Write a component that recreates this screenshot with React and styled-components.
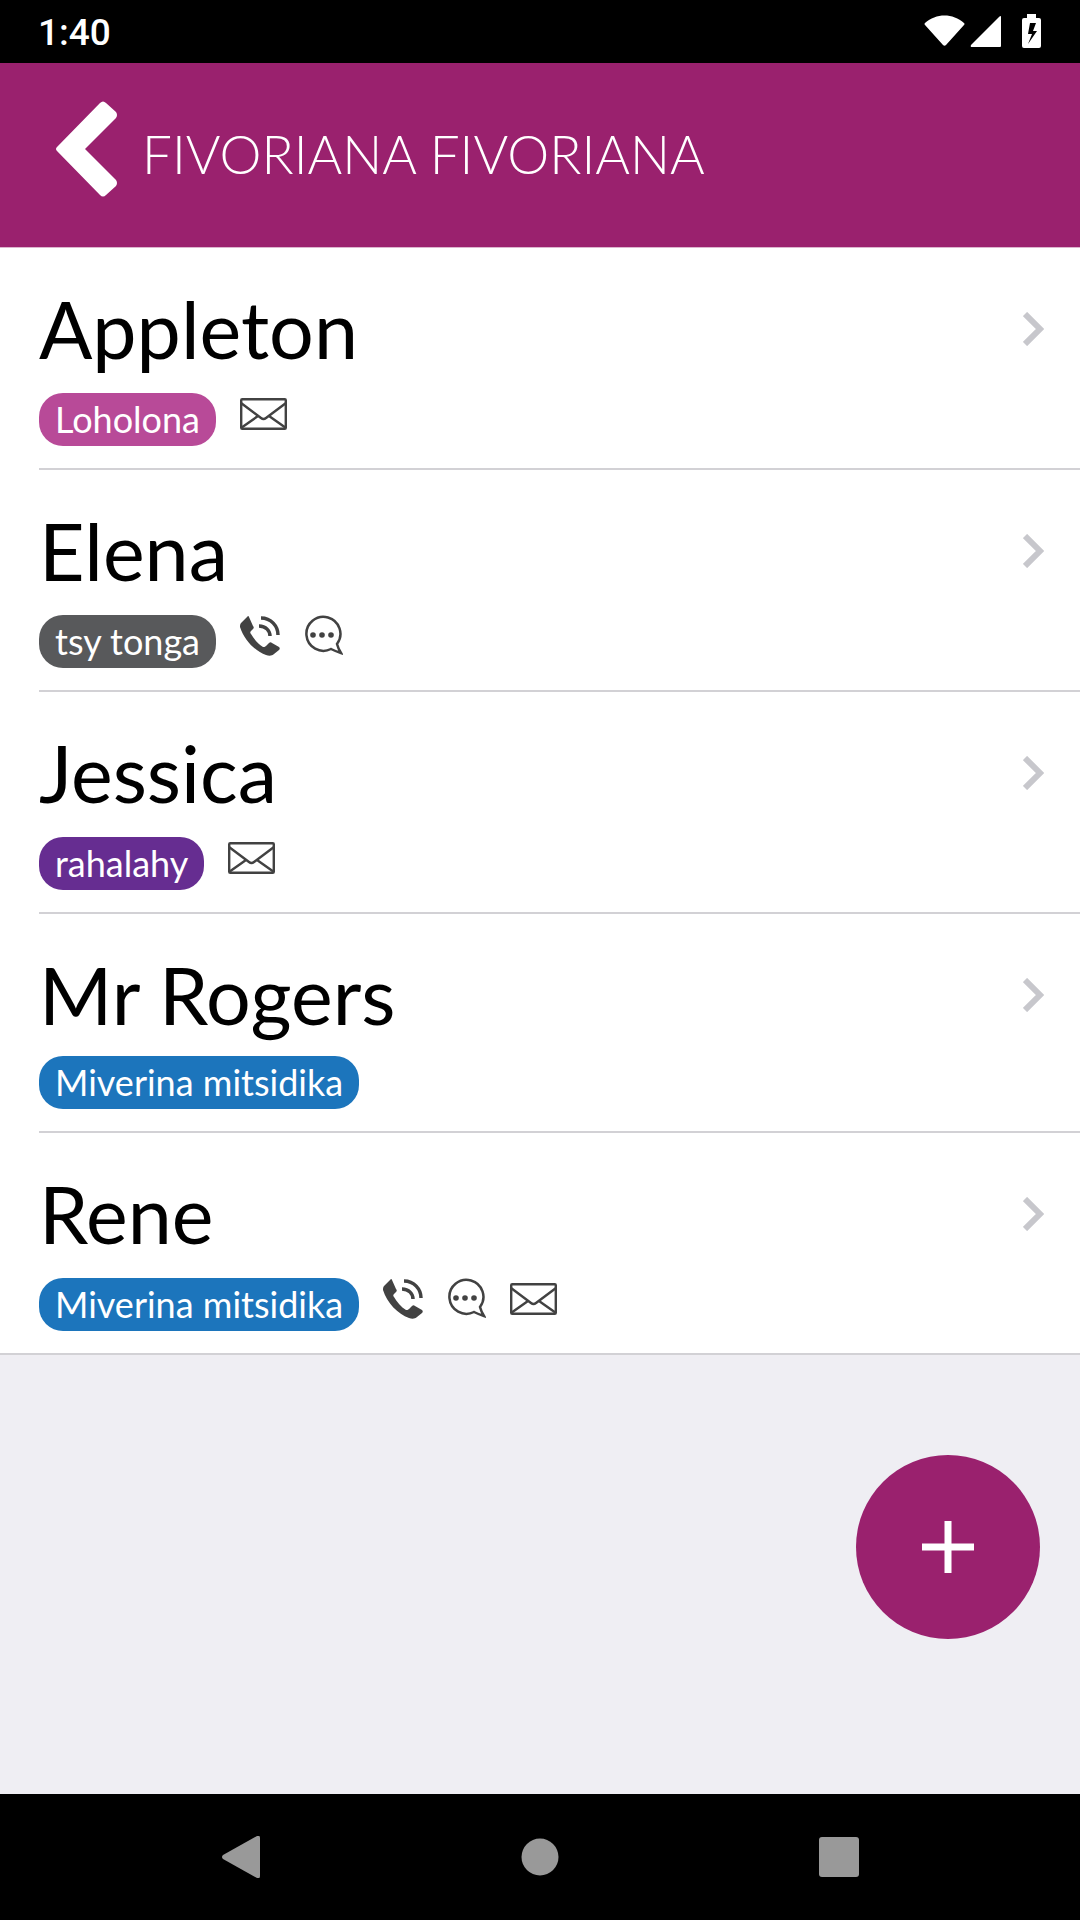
import React from "react";
import styled, { createGlobalStyle } from "styled-components";

const __PRIMARY = "#9a216e";
const __BACKGROUND = "#efeef3";
const __LINE = "#d2d1d5";
const __ICON = "#424242";
const __NAV = "#999999";

const GlobalStyle = createGlobalStyle`
  * {
    box-sizing: border-box;
  }
  body {
    margin: 0;
    background: ${__BACKGROUND};
    font-family: Lato, "Liberation Sans", sans-serif;
  }
  button {
    border: 0;
    padding: 0;
    background: none;
    font: inherit;
    cursor: pointer;
  }
  svg {
    display: block;
  }
`;

const Screen = styled.div`
  min-height: 100vh;
  display: flex;
  flex-direction: column;
`;

const StatusBar = styled.div`
  height: 63px;
  padding: 2px 38px 0;
  display: flex;
  align-items: center;
  justify-content: space-between;
  background: #000000;
  color: #ffffff;
`;

const Clock = styled.span`
  font-family: Roboto, sans-serif;
  font-size: 37px;
  font-weight: 500;
`;

const StatusIcons = styled.div`
  padding-bottom: 2px;
`;

const Header = styled.header`
  height: 185px;
  padding-left: 56px;
  display: flex;
  align-items: center;
  background: ${__PRIMARY};
  border-bottom: 1px solid #dcb5ce;
  color: #ffffff;
`;

const BackButton = styled.button`
  padding-bottom: 12px;
`;

const Title = styled.h1`
  margin: 0 0 0 25px;
  padding-bottom: 2px;
  font-size: 53px;
  line-height: 64px;
  font-weight: 300;
`;

const Content = styled.main`
  flex: 1;
  position: relative;
`;

const List = styled.ul`
  margin: 0;
  padding: 0;
  list-style: none;
  background: #ffffff;
  border-bottom: 2px solid ${__LINE};
`;

const Item = styled.li`
  margin-left: 39px;
  border-bottom: 2px solid ${__LINE};

  &:last-child {
    border-bottom: 0;
  }
`;

const RowButton = styled.button`
  display: block;
  width: 100%;
  padding: 33px 36px 22px 0;
  text-align: left;
`;

const NameLine = styled.span`
  display: flex;
  align-items: center;
  justify-content: space-between;
  margin-bottom: 13px;
`;

const Name = styled.span`
  font-size: 79px;
  line-height: 96px;
  color: #000000;
`;

const Details = styled.span`
  display: flex;
  align-items: flex-end;
  gap: 24px;
`;

const Badge = styled.span`
  padding: 0 16px;
  border-radius: 24px;
  background: ${props => props.$color};
  color: #ffffff;
  font-size: 36px;
  line-height: 53px;
`;

const IconBox = styled.span`
  height: 56px;
`;

const AddButton = styled.button`
  position: absolute;
  right: 40px;
  bottom: 155px;
  width: 184px;
  height: 184px;
  display: flex;
  align-items: center;
  justify-content: center;
  border-radius: 50%;
  background: ${__PRIMARY};
`;

const NavBar = styled.nav`
  height: 126px;
  display: flex;
  align-items: center;
  justify-content: center;
  gap: 199px;
  background: #000000;
`;

const NavButton = styled.button`
  width: 100px;
  height: 100px;
  display: flex;
  align-items: center;
  justify-content: center;
`;

const PhoneIcon = () => (
  <svg width="40" height="48" viewBox="0 0 40 48">
    <path
      fill={__ICON}
      d="M8 4 L1 11 C0 12 0 14 0 15 C4 28 15 39 26 43 C29 44 32 44 34 42 L39 38 C40 37 40 36 39 35 L32 31 C31 30 30 30 29 31 L26 34 C25 35 24 35 23 35 C18 32 14 27 11 22 C10 21 10 20 11 19 L13 17 C14 16 14 15 13 14 L9 5 C9 4 8 4 8 4 Z"
    />
    <path
      fill="none"
      stroke={__ICON}
      strokeWidth="3.5"
      d="M19 14 C26 14 30 19 30 24 M21 6 C31 6 38 14 38 23"
    />
  </svg>
);

const MessageIcon = () => (
  <svg width="39" height="48" viewBox="0 0 39 48">
    <path
      fill="none"
      stroke={__ICON}
      strokeWidth="2.5"
      d="M27 37 A17 17 0 1 1 33 32 Q34 36 37 41 Q31 39 27 37 Z"
    />
    <circle cx="9" cy="23" r="2.8" fill={__ICON} />
    <circle cx="18" cy="23" r="2.8" fill={__ICON} />
    <circle cx="27" cy="23" r="2.8" fill={__ICON} />
  </svg>
);

const MailIcon = () => (
  <svg width="47" height="48" viewBox="0 0 47 48">
    <g fill="none" stroke={__ICON} strokeWidth="2.4">
      <rect x="1.2" y="9.2" width="44.6" height="29.6" rx="1" />
      <path d="M1 13 L21 28 Q23.500 30 26 28 L46 13 M1 38 L18 26 M46 38 L29 26" />
    </g>
  </svg>
);

const ICONS = { phone: PhoneIcon, message: MessageIcon, mail: MailIcon };

const Chevron = () => (
  <svg width="21" height="34" viewBox="0 0 21 34">
    <path
      fill="none"
      stroke="#c7c7cc"
      strokeWidth="6"
      d="M2 2 L17 17 L2 32"
    />
  </svg>
);

const contacts = [
  { name: "Appleton", status: "Loholona", color: "#b84a98", icons: ["mail"] },
  {
    name: "Elena",
    status: "tsy tonga",
    color: "#58595b",
    icons: ["phone", "message"]
  },
  { name: "Jessica", status: "rahalahy", color: "#662d91", icons: ["mail"] },
  {
    name: "Mr Rogers",
    status: "Miverina mitsidika",
    color: "#1c75bc",
    icons: []
  },
  {
    name: "Rene",
    status: "Miverina mitsidika",
    color: "#1c75bc",
    icons: ["phone", "message", "mail"]
  }
];

const Contact = ({ name, status, color, icons }) => (
  <Item>
    <RowButton type="button">
      <NameLine>
        <Name>{name}</Name>
        <Chevron />
      </NameLine>
      <Details>
        <Badge $color={color}>{status}</Badge>
        {icons.map(icon => {
          const Icon = ICONS[icon];
          return (
            <IconBox key={icon}>
              <Icon />
            </IconBox>
          );
        })}
      </Details>
    </RowButton>
  </Item>
);

const App = () => {
  return (
    <Screen>
      <GlobalStyle />
      <StatusBar>
        <Clock>1:40</Clock>
        <StatusIcons>
          <svg width="118" height="36" viewBox="0 0 118 36" fill="#ffffff">
            <path d="M1 9 C12 -1 29 -1 40 9 Q41 10 40 11 L22 31 Q20.500 32.500 19 31 L1 11 Q0 10 1 9 Z" />
            <path d="M47 31 L75 3 Q77 1 77 3 V32 Q77 33 76 33 H48 Q46 33 47 31 Z" />
            <path
              fillRule="evenodd"
              d="M103 0 H112 V4 H115 Q117 4 117 6 V32 Q117 34 115 34 H100 Q98 34 98 32 V6 Q98 4 100 4 H103 Z M106 9 L104 20 H108 L104 30 L113 17 H109 L112 9 Z"
            />
          </svg>
        </StatusIcons>
      </StatusBar>
      <Header>
        <BackButton type="button" aria-label="Back">
          <svg width="61" height="96" viewBox="0 0 61 96" fill="#ffffff">
            <path d="M1 46 L44 2 Q47 -1 50 2 L60 11 Q62 14 60 17 L29 48 L60 79 Q62 82 60 85 L50 94 Q47 97 44 94 L1 50 Q-1 48 1 46 Z" />
          </svg>
        </BackButton>
        <Title>FIVORIANA FIVORIANA</Title>
      </Header>
      <Content>
        <List>
          {contacts.map(contact => (
            <Contact key={contact.name} {...contact} />
          ))}
        </List>
        <AddButton type="button" aria-label="Add">
          <svg width="52" height="52" viewBox="0 0 52 52">
            <path stroke="#ffffff" strokeWidth="7" d="M26 0 V52 M0 26 H52" />
          </svg>
        </AddButton>
      </Content>
      <NavBar>
        <NavButton type="button" aria-label="Back">
          <svg width="38" height="42" viewBox="0 0 38 42" fill={__NAV}>
            <path d="M1 19 L35 0 Q38 -1 38 2 V40 Q38 43 35 42 L1 23 Q-1 21 1 19 Z" />
          </svg>
        </NavButton>
        <NavButton type="button" aria-label="Home">
          <svg width="38" height="38" viewBox="0 0 38 38" fill={__NAV}>
            <circle cx="19" cy="19" r="18.500" />
          </svg>
        </NavButton>
        <NavButton type="button" aria-label="Recent apps">
          <svg width="40" height="40" viewBox="0 0 40 40" fill={__NAV}>
            <rect width="40" height="40" rx="3" />
          </svg>
        </NavButton>
      </NavBar>
    </Screen>
  );
};

export default App;
